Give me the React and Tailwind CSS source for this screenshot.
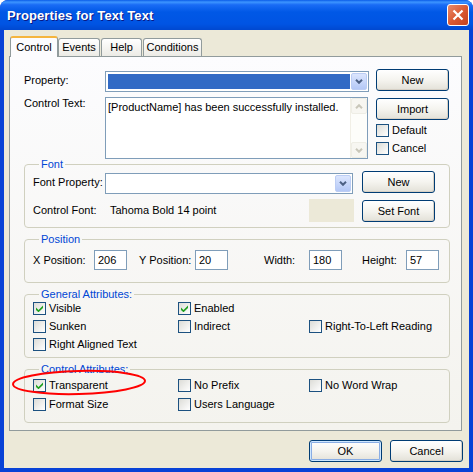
import React from "react";

function XPButton({ children, focused = false, className = "" }) {
  return (
    <div
      className={`w-[73px] h-[22px] shrink-0 rounded-[3px] border border-[#003C74] bg-gradient-to-b from-[#FFFFFF] via-[#F5F4EF] to-[#E3E1D8] flex items-center justify-center text-[11px] text-black ${
        focused
          ? "shadow-[inset_0_0_0_1px_#CEE7FF,inset_0_0_0_2px_#89ADE4]"
          : "shadow-[inset_-1px_-1px_0_#D6D0C5]"
      } ${className}`}
    >
      {children}
    </div>
  );
}

function Check({ checked }) {
  return (
    <div className="w-[13px] h-[13px] shrink-0 border border-[#1C5180] bg-gradient-to-br from-[#DCDCD7] to-[#FFFFFF] flex items-center justify-center">
      {checked && (
        <svg width="7" height="7" viewBox="0 0 7 7">
          <polygon points="0,2.5 2.5,5 7,0.5 7,3 2.5,7.3 0,5" fill="#21A121" />
        </svg>
      )}
    </div>
  );
}

function CheckItem({ checked, label }) {
  return (
    <div className="flex items-center gap-[3px] h-[13px]">
      <Check checked={checked} />
      <span className="leading-[13px] whitespace-nowrap">{label}</span>
    </div>
  );
}

function DropBtn() {
  return (
    <div className="w-[16px] shrink-0 self-stretch rounded-[2px] border border-[#BCCDF4] bg-gradient-to-b from-[#DCE6FE] to-[#B4C8F6] flex items-center justify-center">
      <svg width="8" height="5" viewBox="0 0 8 5">
        <path d="M1 0.8 L4 3.8 L7 0.8" stroke="#4D6185" strokeWidth="2" fill="none" />
      </svg>
    </div>
  );
}

function TextBox({ value }) {
  return (
    <div className="w-[33px] h-[20px] shrink-0 border border-[#7F9DB9] bg-white flex items-center pl-[3px] leading-[13px]">
      {value}
    </div>
  );
}

function Group({ title, children, className = "" }) {
  return (
    <fieldset className={`w-[426px] border border-[#D0D0BF] rounded-[4px] pl-[8px] ${className}`}>
      <legend className="ml-[6px] px-[2px] text-[#0046D5] leading-[13px]">{title}</legend>
      {children}
    </fieldset>
  );
}

function ScrollArrow({ up }) {
  return (
    <div className="w-[16px] h-[16px] rounded-[2px] border border-[#EEEDE5] bg-[#F7F6F1] flex items-center justify-center">
      <svg width="8" height="5" viewBox="0 0 8 5">
        <path
          d={up ? "M1 4.2 L4 1.2 L7 4.2" : "M1 0.8 L4 3.8 L7 0.8"}
          stroke="#C9C7BA"
          strokeWidth="2"
          fill="none"
        />
      </svg>
    </div>
  );
}

export default function App() {
  return (
    <div className="w-[473px] h-[472px] relative bg-[#0842D6] rounded-t-[8px] overflow-hidden font-['Liberation_Sans',Arial,sans-serif] text-[11px] text-black leading-none flex flex-col">
      {/* Title bar */}
      <div className="h-[30px] shrink-0 flex items-center pl-[7px] pr-[4px] bg-[linear-gradient(to_bottom,#0A5CE8_0%,#3D95FF_7%,#1A6CF5_16%,#0058E6_40%,#0054E3_80%,#0048D0_100%)]">
        <span className="flex-1 font-bold text-[13px] text-white [text-shadow:1px_1px_0_#0A1883] tracking-[0.1px]">
          Properties for Text Text
        </span>
        <div className="w-[22px] h-[22px] rounded-[3px] border border-white bg-gradient-to-br from-[#E88A6A] via-[#DA5A33] to-[#C4421E] flex items-center justify-center">
          <svg width="12" height="12" viewBox="0 0 12 12">
            <path d="M1.5 1.5 L10.5 10.5 M10.5 1.5 L1.5 10.5" stroke="white" strokeWidth="2.2" />
          </svg>
        </div>
      </div>

      {/* Body */}
      <div className="flex-1 mx-[4px] mb-[4px] bg-[#ECE9D8] flex flex-col">
        {/* Tabs */}
        <div className="flex items-end h-[21px] mt-[6px] pl-[6px] relative z-10">
          <div className="w-[48px] h-[21px] rounded-t-[3px] border-x border-[#919B9C] border-t-2 border-t-[#F5B53E] bg-[#FCFCFE] flex justify-center pt-[3px] leading-[13px]">
            Control
          </div>
          <div className="w-[42px] h-[18px] mb-[1px] rounded-t-[3px] border border-b-0 border-[#919B9C] bg-gradient-to-b from-[#FFFFFF] to-[#ECEBE5] flex items-center justify-center leading-[13px]">
            Events
          </div>
          <div className="w-[41px] h-[18px] mb-[1px] ml-[1px] rounded-t-[3px] border border-b-0 border-[#919B9C] bg-gradient-to-b from-[#FFFFFF] to-[#ECEBE5] flex items-center justify-center leading-[13px]">
            Help
          </div>
          <div className="w-[59px] h-[18px] mb-[1px] ml-[1px] rounded-t-[3px] border border-b-0 border-[#919B9C] bg-gradient-to-b from-[#FFFFFF] to-[#ECEBE5] flex items-center justify-center leading-[13px]">
            Conditions
          </div>
        </div>

        {/* Panel */}
        <div className="-mt-px ml-[5px] w-[453px] h-[375px] border border-[#919B9C] bg-gradient-to-b from-[#FCFCFE] to-[#F4F3EE] pl-[14px] pr-[11px] pt-[12px] flex flex-col">
          {/* Property row */}
          <div className="flex h-[22px]">
            <div className="w-[81px] flex items-center leading-[13px]">Property:</div>
            <div className="w-[264px] h-[21px] mt-[2px] border border-[#7F9DB9] bg-white flex p-[1px] gap-[1px]">
              <div className="flex-1 my-[1px] ml-[1px] bg-[#316AC5]" />
              <DropBtn />
            </div>
            <XPButton className="ml-[7px]">New</XPButton>
          </div>

          {/* Control text row */}
          <div className="flex mt-[6px] h-[62px]">
            <div className="w-[81px] leading-[13px]">Control Text:</div>
            <div className="w-[263px] h-[62px] border border-[#7F9DB9] bg-white flex">
              <div className="flex-1 pl-[2px] pt-[3px] leading-[13px] whitespace-nowrap">
                [ProductName] has been successfully installed.
              </div>
              <div className="w-[17px] flex flex-col justify-between bg-[#FDFDFA] border-l border-[#F1EFE6]">
                <ScrollArrow up />
                <ScrollArrow />
              </div>
            </div>
            <div className="ml-[8px] flex flex-col pt-[1px]">
              <XPButton>Import</XPButton>
              <div className="mt-[4px] flex flex-col gap-[5px]">
                <CheckItem label="Default" />
                <CheckItem label="Cancel" />
              </div>
            </div>
          </div>

          {/* Font */}
          <Group title="Font" className="-mt-px pb-[5px]">
            <div className="flex h-[22px]">
              <div className="w-[72px] flex items-center leading-[13px]">Font Property:</div>
              <div className="w-[248px] h-[21px] mt-[2px] border border-[#7F9DB9] bg-white flex p-[1px]">
                <div className="flex-1" />
                <DropBtn />
              </div>
              <XPButton className="ml-[9px]">New</XPButton>
            </div>
            <div className="flex h-[23px] mt-[6px]">
              <div className="w-[77px] flex items-center leading-[13px]">Control Font:</div>
              <div className="w-[199px] flex items-center leading-[13px]">Tahoma Bold 14 point</div>
              <div className="w-[45px] h-[23px] bg-[#ECE9D8]" />
              <XPButton className="ml-[8px] mt-[1px]">Set Font</XPButton>
            </div>
          </Group>

          {/* Position */}
          <Group title="Position" className="mt-[5px] pt-[4px] pb-[12px]">
            <div className="flex items-center h-[20px]">
              <div className="w-[61px] leading-[13px]">X Position:</div>
              <TextBox value="206" />
              <div className="ml-[12px] w-[56px] leading-[13px]">Y Position:</div>
              <TextBox value="20" />
              <div className="ml-[36px] w-[45px] leading-[13px]">Width:</div>
              <TextBox value="180" />
              <div className="ml-[20px] w-[44px] leading-[13px]">Height:</div>
              <TextBox value="57" />
            </div>
          </Group>

          {/* General Attributes */}
          <Group title="General Attributes:" className="mt-[5px] pt-[1px] pb-[6px]">
            <div className="grid grid-cols-[145px_131px_1fr] gap-y-[5px]">
              <CheckItem checked label="Visible" />
              <CheckItem checked label="Enabled" />
              <div />
              <CheckItem label="Sunken" />
              <CheckItem label="Indirect" />
              <CheckItem label="Right-To-Left Reading" />
              <CheckItem label="Right Aligned Text" />
            </div>
          </Group>

          {/* Control Attributes */}
          <Group title="Control Attributes:" className="mt-[5px] pt-[3px] pb-[11px]">
            <div className="grid grid-cols-[145px_131px_1fr] gap-y-[6px]">
              <CheckItem checked label="Transparent" />
              <CheckItem label="No Prefix" />
              <CheckItem label="No Word Wrap" />
              <CheckItem label="Format Size" />
              <CheckItem label="Users Language" />
            </div>
          </Group>
        </div>

        {/* Bottom buttons */}
        <div className="flex justify-end gap-[8px] pr-[6px] mt-[9px]">
          <XPButton focused>OK</XPButton>
          <XPButton>Cancel</XPButton>
        </div>
      </div>

      {/* Red annotation ellipse */}
      <svg
        className="absolute left-[11px] top-[368px] pointer-events-none"
        width="138"
        height="30"
        viewBox="0 0 138 30"
      >
        <ellipse
          cx="68"
          cy="14.5"
          rx="66"
          ry="11.5"
          transform="rotate(-1.5 68 14.5)"
          fill="none"
          stroke="#FF0000"
          strokeWidth="2"
        />
      </svg>
    </div>
  );
}
